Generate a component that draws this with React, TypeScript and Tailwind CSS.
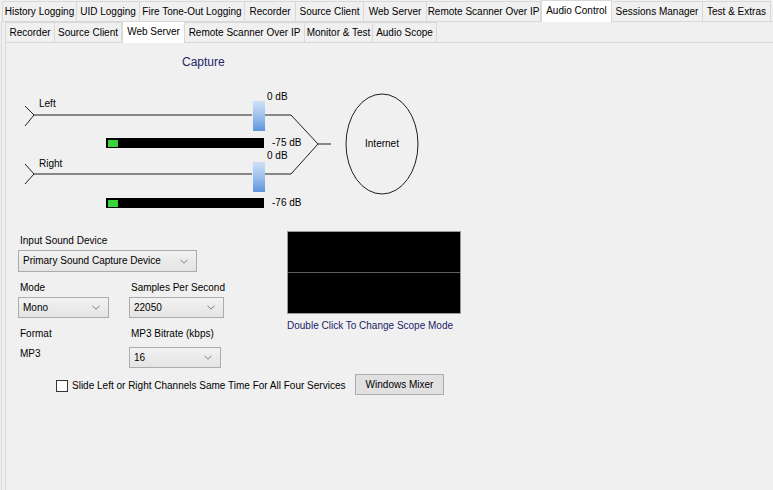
import React from "react";

const topTabs = [
  { label: "History Logging", w: "w-[75px]" },
  { label: "UID Logging", w: "w-[63px]" },
  { label: "Fire Tone-Out Logging", w: "w-[105px]" },
  { label: "Recorder", w: "w-[51px]" },
  { label: "Source Client", w: "w-[68px]" },
  { label: "Web Server", w: "w-[63px]" },
  { label: "Remote Scanner Over IP", w: "w-[114px]" },
  { label: "Audio Control", w: "w-[71px]", active: true },
  { label: "Sessions Manager", w: "w-[91px]" },
  { label: "Test & Extras", w: "w-[68px]" },
];

const subTabs = [
  { label: "Recorder", w: "w-[50px]" },
  { label: "Source Client", w: "w-[67px]" },
  { label: "Web Server", w: "w-[63px]", active: true },
  { label: "Remote Scanner Over IP", w: "w-[120px]" },
  { label: "Monitor & Test", w: "w-[68px]" },
  { label: "Audio Scope", w: "w-[64px]" },
];

type Tab = { label: string; w: string; active?: boolean };

function TabStrip({ tabs, className }: { tabs: Tab[]; className?: string }) {
  return (
    <div className={"flex items-end " + (className ?? "")}>
      {tabs.map((tab) =>
        tab.active ? (
          <div
            key={tab.label}
            className={`${tab.w} relative z-10 -mb-px flex h-[22px] items-center justify-center border border-b-0 border-[#d9d9d9] bg-white pb-[2px] whitespace-nowrap`}
          >
            {tab.label}
          </div>
        ) : (
          <div
            key={tab.label}
            className={`${tab.w} flex h-[20px] items-center justify-center border-r border-t border-[#d9d9d9] bg-[#f0f0f0] whitespace-nowrap first:border-l`}
          >
            {tab.label}
          </div>
        )
      )}
    </div>
  );
}

function Chevron() {
  return (
    <svg width="8" height="5" viewBox="0 0 8 5" className="shrink-0">
      <polyline points="0.5,0.8 4,4.2 7.5,0.8" fill="none" stroke="#7a7a7a" strokeWidth="1" />
    </svg>
  );
}

function Select({ value, w, h = "h-[21px]" }: { value: string; w: string; h?: string }) {
  return (
    <div
      className={`${w} ${h} flex items-center justify-between border border-[#acacac] bg-gradient-to-b from-[#f2f2f2] to-[#e4e4e4] pl-[4px] pr-[8px]`}
    >
      <span className="whitespace-nowrap">{value}</span>
      <Chevron />
    </div>
  );
}

function Meter({ top }: { top: string }) {
  return (
    <div className={`absolute left-[99px] ${top} h-[10px] w-[158px] bg-black p-[2px]`}>
      <div className="h-[7px] w-[10px] bg-[#39d43a]" />
    </div>
  );
}

function Thumb({ top }: { top: string }) {
  return (
    <div
      className={`absolute left-[245px] ${top} h-[30px] w-[13px] bg-gradient-to-b from-[#cfe0f5] via-[#9ec0ec] to-[#5d93de] shadow-[inset_1px_0_0_#e6f0fb]`}
    />
  );
}

function CaptureDiagram() {
  return (
    <div className="relative ml-px mt-px h-[180px] w-[470px]">
      <div className="absolute left-[175px] top-[11px] text-[12px] text-[#26266a]">Capture</div>
      <svg className="absolute left-0 top-0" width="470" height="180" viewBox="0 0 470 180">
        <g fill="none" stroke="#1e1e1e" strokeWidth="1">
          <polyline points="18,62 27,71 18,82" />
          <polyline points="27,71 284,71 311,100" />
          <polyline points="18,120 27,130 18,140" />
          <polyline points="27,130 284,130 311,100" />
          <line x1="311" y1="100" x2="324" y2="100" />
          <ellipse cx="375" cy="100" rx="36" ry="50" />
        </g>
      </svg>
      <div className="absolute left-[32px] top-[53px]">Left</div>
      <div className="absolute left-[32px] top-[113px]">Right</div>
      <Thumb top="top-[57px]" />
      <Thumb top="top-[118px]" />
      <div className="absolute left-[260px] top-[46px]">0 dB</div>
      <div className="absolute left-[260px] top-[105px]">0 dB</div>
      <div className="absolute left-[265px] top-[92px]">-75 dB</div>
      <div className="absolute left-[265px] top-[152px]">-76 dB</div>
      <Meter top="top-[94px]" />
      <Meter top="top-[154px]" />
      <div className="absolute left-[339px] top-[93px] w-[72px] text-center">Internet</div>
    </div>
  );
}

export default function App() {
  return (
    <div className="h-[490px] w-[773px] overflow-hidden bg-[#f0f0f0] font-['Liberation_Sans',Arial,sans-serif] text-[10px] leading-[14px] text-black">
      <TabStrip tabs={topTabs} className="h-[21px] pl-[2px]" />
      <div className="ml-px h-[469px] border-l border-t border-[#d9d9d9] pl-[3px]">
        <TabStrip tabs={subTabs} className="h-[20px]" />
        <div className="h-[460px] border-l border-t border-[#d9d9d9]">
          <CaptureDiagram />

          <div className="flex">
            <div className="ml-[12px] w-[206px] pt-[10px]">
              <div className="pl-[2px] whitespace-nowrap">Input Sound Device</div>
              <div className="mt-[2px]">
                <Select value="Primary Sound Capture Device" w="w-[179px]" h="h-[22px]" />
              </div>

              <div className="mt-[9px] flex gap-[20px]">
                <div>
                  <div className="pl-[2px] whitespace-nowrap">Mode</div>
                  <div className="mt-[2px]">
                    <Select value="Mono" w="w-[91px]" />
                  </div>
                </div>
                <div>
                  <div className="pl-[2px] whitespace-nowrap">Samples Per Second</div>
                  <div className="mt-[2px]">
                    <Select value="22050" w="w-[95px]" />
                  </div>
                </div>
              </div>

              <div className="mt-[9px] flex gap-[20px]">
                <div className="w-[91px] shrink-0">
                  <div className="pl-[2px]">Format</div>
                  <div className="mt-[6px] pl-[2px]">MP3</div>
                </div>
                <div>
                  <div className="pl-[2px] whitespace-nowrap">MP3 Bitrate (kbps)</div>
                  <div className="mt-[6px]">
                    <Select value="16" w="w-[92px]" />
                  </div>
                </div>
              </div>
            </div>

            <div className="ml-[63px] pt-[7px]">
              <div className="flex h-[83px] w-[174px] flex-col border border-[#9a9a9a] bg-black">
                <div className="h-[40px]" />
                <div className="h-px bg-[#5e5e5e]" />
              </div>
              <div className="mt-[5px] whitespace-nowrap text-[#22226a]">Double Click To Change Scope Mode</div>
            </div>
          </div>

          <div className="mt-[6px] flex items-center">
            <div className="ml-[50px] flex w-[299px] items-center gap-[4px] pt-[3px]">
              <div className="h-[12px] w-[12px] shrink-0 border border-[#333333] bg-white" />
              <span className="whitespace-nowrap">Slide Left or Right Channels Same Time For All Four Services</span>
            </div>
            <div className="flex h-[21px] w-[89px] items-center justify-center border border-[#adadad] bg-[#e1e1e1]">
              Windows Mixer
            </div>
          </div>
        </div>
      </div>
    </div>
  );
}
